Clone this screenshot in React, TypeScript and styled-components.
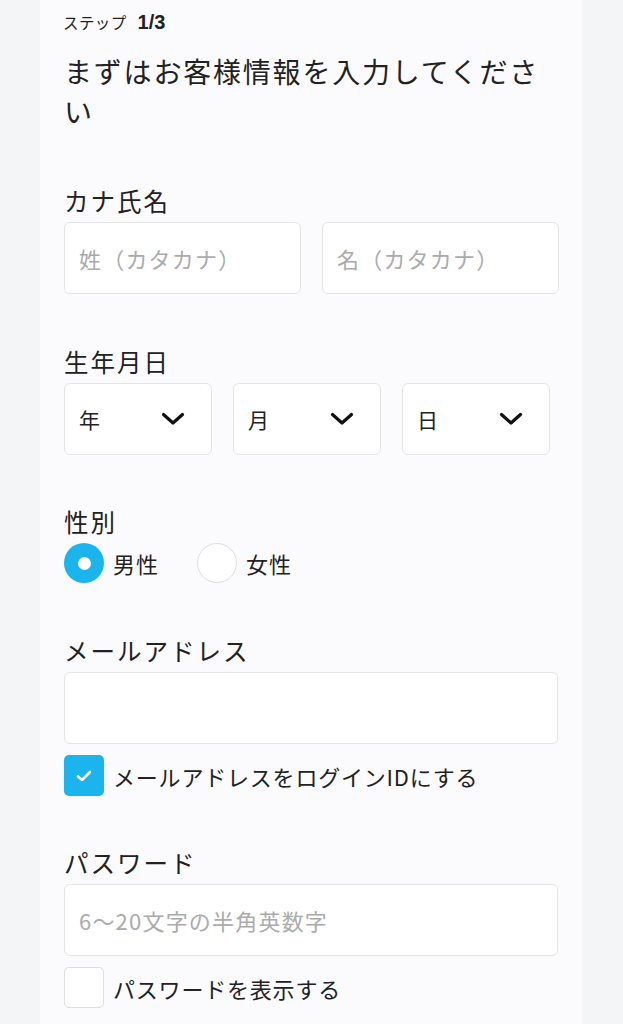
import React from "react";
import styled, { createGlobalStyle } from "styled-components";

const Global = createGlobalStyle`
  html, body { margin: 0; padding: 0; background: #f4f5f7; }
  body { font-family: "Noto Sans CJK JP", "Noto Sans", sans-serif; color: #222; }
  * { box-sizing: border-box; }
`;

const Page = styled.div`
  display: flex;
  padding-left: 40px;
  min-height: 1024px;
`;

const Panel = styled.main`
  width: 542px;
  background: #fbfbfd;
  padding: 12px 24px 40px 24px;
  display: flex;
  flex-direction: column;
`;

const Step = styled.div`
  display: flex;
  align-items: baseline;
  gap: 11px;
  height: 20px;
  line-height: 20px;
  font-size: 15.5px;
  letter-spacing: 0.4px;
  color: #222;
  margin-left: -1px;
`;

const StepNum = styled.span`
  font-family: "Liberation Sans", "Noto Sans", sans-serif;
  font-weight: 700;
  font-size: 20px;
  letter-spacing: 0;
`;

const Heading = styled.h1`
  margin: 19px 0 0 0;
  font-size: 28px;
  font-weight: 400;
  line-height: 40px;
  letter-spacing: 1.8px;
  color: #222;
`;

const Section = styled.section<{ $mt: number }>`
  margin-top: ${(p) => p.$mt}px;
  display: flex;
  flex-direction: column;
`;

const Label = styled.div`
  font-size: 24.5px;
  line-height: 32px;
  letter-spacing: 2px;
  color: #222;
  margin-bottom: 5px;
`;

const Row = styled.div<{ $cols: string; $gap: number }>`
  display: grid;
  grid-template-columns: ${(p) => p.$cols};
  column-gap: ${(p) => p.$gap}px;
`;

const Input = styled.div<{ $placeholder?: boolean }>`
  height: 72px;
  background: #fff;
  border: 1.5px solid #e4e4e6;
  border-radius: 6px;
  display: flex;
  align-items: center;
  padding-left: 14px;
  font-size: 22px;
  letter-spacing: 1.2px;
  color: ${(p) => (p.$placeholder ? "#ababab" : "#222")};
`;

const Select = styled(Input)`
  justify-content: space-between;
  padding-right: 26px;
  font-size: 21px;
  color: #222;
`;

const RadioRow = styled.div`
  display: flex;
  align-items: center;
  height: 40px;
  gap: 38px;
`;

const Choice = styled.div`
  display: flex;
  align-items: center;
  gap: 9px;
  font-size: 22px;
  letter-spacing: 1px;
  color: #222;
`;

const Radio = styled.span<{ $on?: boolean }>`
  width: 40px;
  height: 40px;
  border-radius: 50%;
  background: ${(p) => (p.$on ? "#1cb4ec" : "#fff")};
  border: ${(p) => (p.$on ? "none" : "1.5px solid #dedede")};
  display: flex;
  align-items: center;
  justify-content: center;
  &::after {
    content: "";
    display: ${(p) => (p.$on ? "block" : "none")};
    width: 13px;
    height: 13px;
    border-radius: 50%;
    background: #fff;
  }
`;

const CheckRow = styled.div`
  display: flex;
  align-items: center;
  gap: 9px;
  margin-top: 11px;
  font-size: 22px;
  letter-spacing: 0.8px;
  color: #222;
`;

const Box = styled.span<{ $on?: boolean }>`
  width: 40px;
  height: 41px;
  border-radius: 5px;
  background: ${(p) => (p.$on ? "#1cb4ec" : "#fff")};
  border: ${(p) => (p.$on ? "none" : "1.5px solid #dedede")};
  display: flex;
  align-items: center;
  justify-content: center;
  flex-shrink: 0;
`;

const Chevron = () => (
  <svg width="24" height="14" viewBox="0 0 24 14" fill="none">
    <path d="M2.5 2.5 L12 11 L21.5 2.5" stroke="#111" strokeWidth="3.2" strokeLinecap="round" strokeLinejoin="round" />
  </svg>
);

const Check = () => (
  <svg width="18" height="14" viewBox="0 0 18 14" fill="none">
    <path d="M3 7.5 L7 11 L15 3" stroke="#fff" strokeWidth="2.6" strokeLinecap="round" strokeLinejoin="round" />
  </svg>
);

export default function App() {
  return (
    <>
      <Global />
      <Page>
        <Panel>
          <Step>
            <span>ステップ</span>
            <StepNum>1/3</StepNum>
          </Step>
          <Heading>まずはお客様情報を入力してください</Heading>

          <Section $mt={54}>
            <Label>カナ氏名</Label>
            <Row $cols="237px 237px" $gap={21}>
              <Input $placeholder>姓（カタカナ）</Input>
              <Input $placeholder>名（カタカナ）</Input>
            </Row>
          </Section>

          <Section $mt={52}>
            <Label>生年月日</Label>
            <Row $cols="148px 148px 148px" $gap={21}>
              <Select>年<Chevron /></Select>
              <Select>月<Chevron /></Select>
              <Select>日<Chevron /></Select>
            </Row>
          </Section>

          <Section $mt={51}>
            <Label>性別</Label>
            <RadioRow>
              <Choice><Radio $on />男性</Choice>
              <Choice><Radio />女性</Choice>
            </RadioRow>
          </Section>

          <Section $mt={52}>
            <Label>メールアドレス</Label>
            <Input />
            <CheckRow>
              <Box $on><Check /></Box>
              メールアドレスをログインIDにする
            </CheckRow>
          </Section>

          <Section $mt={51}>
            <Label>パスワード</Label>
            <Input $placeholder>6〜20文字の半角英数字</Input>
            <CheckRow>
              <Box />
              パスワードを表示する
            </CheckRow>
          </Section>
        </Panel>
      </Page>
    </>
  );
}
